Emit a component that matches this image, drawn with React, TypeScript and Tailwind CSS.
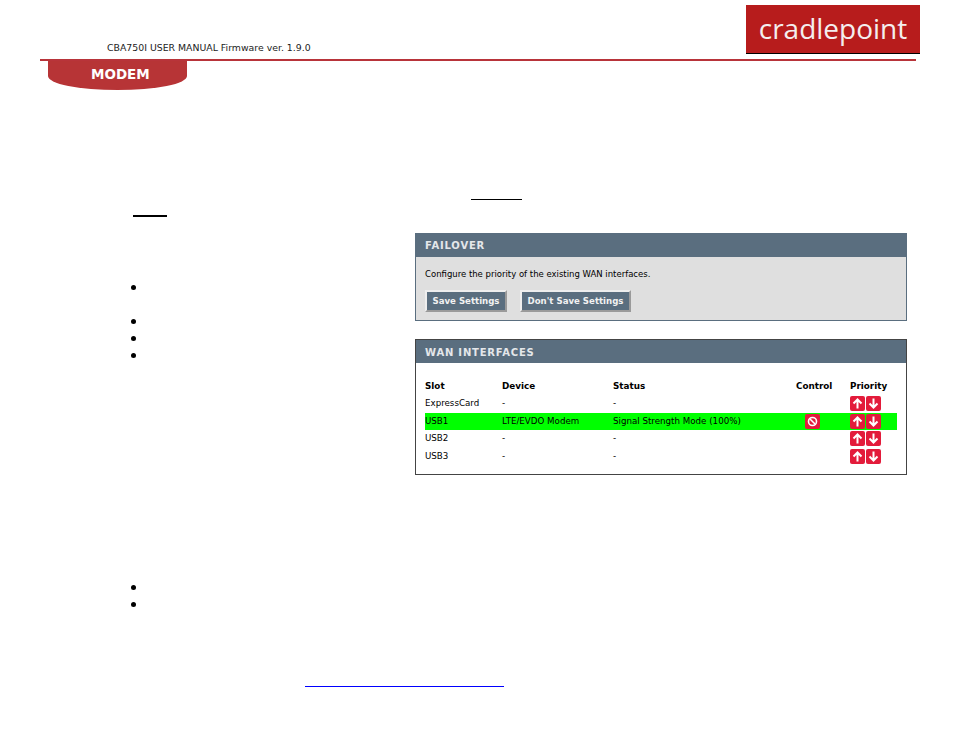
const ui = { fontFamily: '"DejaVu Sans", sans-serif' };

function Bullet({ className = "" }: { className?: string }) {
  return <div className={`w-[5px] h-[5px] rounded-full bg-black ${className}`} />;
}

function Arrow({ up }: { up?: boolean }) {
  return (
    <span className="w-[15px] h-[15px] bg-[#e31b3b] rounded-[2px] flex items-center justify-center">
      <svg width="11" height="11" viewBox="0 0 11 11" fill="none" stroke="#fff" strokeWidth="2">
        {up ? <path d="M5.5 10.5V2M1.5 5.5l4-4 4 4" /> : <path d="M5.5 .5V9M1.5 5.5l4 4 4-4" />}
      </svg>
    </span>
  );
}

function Row({ slot, device, status, on, control }: { slot: string; device: string; status: string; on?: boolean; control?: boolean }) {
  return (
    <div className={`grid grid-cols-[77px_111px_183px_54px_1fr] items-center h-[17.6px] ${on ? "bg-[#00ff00]" : ""}`}>
      <span>{slot}</span>
      <span>{device}</span>
      <span>{status}</span>
      <span className="pl-[9px]">
        {control && (
          <span className="w-[15px] h-[15px] bg-[#e31b3b] rounded-[2px] flex items-center justify-center">
            <svg width="11" height="11" viewBox="0 0 11 11" fill="none" stroke="#fff">
              <circle cx="5.5" cy="5.5" r="4" strokeWidth="1.6" />
              <path d="M3 3l5 5" strokeWidth="1.6" />
            </svg>
          </span>
        )}
      </span>
      <span className="flex gap-[1px]">
        <Arrow up />
        <Arrow />
      </span>
    </div>
  );
}

function Btn({ label, w }: { label: string; w: string }) {
  return (
    <button className={`${w} h-[22px] bg-[#5a6e7f] text-[#f2f2f2] font-bold text-[8.6px] border-2 border-t-[#eeeeee] border-l-[#eeeeee] border-r-[#9a9a9a] border-b-[#9a9a9a]`}>
      {label}
    </button>
  );
}

export default function App() {
  return (
    <div className="w-[954px] h-[738px] bg-white overflow-hidden flex flex-col text-black" style={ui}>
      <header className="h-[59px] flex justify-between items-start pl-[107px] pr-[34px]">
        <span className="mt-[42px] text-[9.35px] leading-[12px] text-[#222]">CBA750I USER MANUAL Firmware ver. 1.9.0</span>
        <div className="mt-[5px] w-[174px] h-[49px] bg-[#b71c1c] border-b border-black flex items-center justify-center text-[#f4eeee] text-[28px] leading-none pb-[3px]" style={{ fontFamily: '"Open Sans", sans-serif' }}>
          cradlepoint
        </div>
      </header>
      <div className="ml-[40px] w-[876px] h-[2px] bg-[#b8343a]" />
      <div className="ml-[48px] w-[139px] h-[29px] bg-[#b73436] rounded-b-[70px_14px] flex items-center pl-[43px] pb-[2px] text-white font-bold text-[13.5px]">
        MODEM
      </div>

      <div className="mt-[109px] ml-[471px] w-[51px] h-[1px] bg-black" />
      <div className="mt-[15px] ml-[133px] w-[34px] h-[2px] bg-black" />

      <div className="mt-[16px] flex">
        <div className="w-[415px] pl-[130.5px] pt-[52px] shrink-0">
          <Bullet />
          <Bullet className="mt-[29px]" />
          <Bullet className="mt-[12px]" />
          <Bullet className="mt-[12px]" />
        </div>
        <div className="w-[492px] text-[9px]">
          <section className="h-[88px] border border-[#5a6e7f] bg-[#dfdfdf]">
            <h2 className="h-[23px] bg-[#5a6e7f] text-[#e4e7ea] font-bold text-[10px] tracking-[0.8px] pl-[9px] leading-[24px]">FAILOVER</h2>
            <p className="pl-[9px] mt-[11px] leading-[12px] text-[8.5px]">Configure the priority of the existing WAN interfaces.</p>
            <div className="pl-[9px] mt-[10px] flex gap-[13px]">
              <Btn label="Save Settings" w="w-[82px]" />
              <Btn label="Don't Save Settings" w="w-[111px]" />
            </div>
          </section>
          <section className="mt-[18px] h-[136px] border border-[#444] text-[8.7px]">
            <h2 className="h-[23px] bg-[#5a6e7f] text-[#e4e7ea] font-bold text-[10px] tracking-[0.8px] pl-[9px] leading-[25px]">WAN INTERFACES</h2>
            <div className="mx-[9px] mt-[15px]">
              <div className="grid grid-cols-[77px_111px_183px_54px_1fr] h-[17px] items-center font-bold text-[8.8px]">
                <span>Slot</span>
                <span>Device</span>
                <span>Status</span>
                <span>Control</span>
                <span>Priority</span>
              </div>
              <Row slot="ExpressCard" device="-" status="-" />
              <Row slot="USB1" device="LTE/EVDO Modem" status="Signal Strength Mode (100%)" on control />
              <Row slot="USB2" device="-" status="-" />
              <Row slot="USB3" device="-" status="-" />
            </div>
          </section>
        </div>
      </div>

      <div className="ml-[130.5px] mt-[110px]">
        <Bullet />
        <Bullet className="mt-[12px]" />
      </div>
      <div className="ml-[305px] mt-[79px] w-[199px] h-[1px] bg-[#0000ff]" />
    </div>
  );
}
